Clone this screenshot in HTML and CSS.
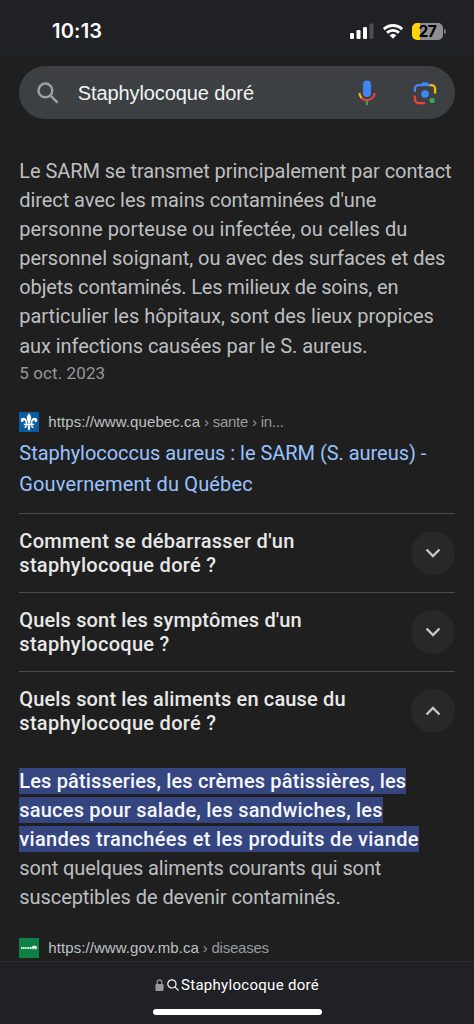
FILE: index.html
```html
<!DOCTYPE html>
<html lang="fr">
<head>
<meta charset="utf-8">
<meta name="viewport" content="width=device-width">
<title>Staphylocoque doré</title>
<link rel="stylesheet" href="styles.css">
</head>
<body>
<div class="phone">
  <header class="status">
    <span class="time">10:13</span>
    <div class="indicators">
      <svg class="signal" viewBox="0 0 24 16"><g fill="#fff"><rect y="10" width="4" height="6" rx="1.2"/><rect x="6.5" y="7" width="4" height="9" rx="1.2"/><rect x="13" y="4" width="4" height="12" rx="1.2"/></g><rect x="19.5" y="0.5" width="4" height="15.5" rx="1.2" fill="#4d4e51"/></svg>
      <svg class="wifi" viewBox="0 0 20 15"><g fill="none" stroke="#fff" stroke-width="2.9"><path d="M.9 5.2a13 13 0 0 1 18.2 0"/><path d="M4 8.8a8.6 8.6 0 0 1 12 0"/></g><path fill="#fff" d="M6.6 11.3a5 5 0 0 1 6.8 0L10 14.8z"/></svg>
      <div class="battery"><span>27</span></div>
    </div>
  </header>

  <main class="page">
    <div class="search">
      <svg class="search-icon" viewBox="0 0 22 22"><g fill="none" stroke="#9aa0a6" stroke-width="2.5"><circle cx="8.4" cy="8.4" r="6.9"/><path d="m13.3 13.3 7.3 7.3"/></g></svg>
      <span class="query">Staphylocoque doré</span>
      <svg class="mic" viewBox="0 0 18 26"><rect x="5" y="0.5" width="8" height="16.5" rx="4" fill="#4285f4"/><g fill="none" stroke-width="2.1"><path stroke="#fbbc04" d="M1.4 13a8 8 0 0 0 2.3 5.2"/><path stroke="#ea4335" d="M3.4 17.9a7.8 7.8 0 0 0 13.2-4.9"/><path stroke="#34a853" d="M9 20.8v4.4"/></g></svg>
      <svg class="lens" viewBox="0 0 24 24"><g fill="none" stroke-width="2.3"><path stroke="#4285f4" d="M1.9 11V7.8a3.6 3.6 0 0 1 3.6-3.6H17"/><path stroke="#fbbc04" d="M16.5 4.2h2a3.6 3.6 0 0 1 3.6 3.6V12.5"/><path stroke="#ea4335" d="M1.9 14.5v4a3.6 3.6 0 0 0 3.6 3.6H12"/></g><path fill="#4285f4" d="M7.3 4.2 9 1.4h6l1.7 2.8z"/><circle cx="12" cy="13" r="3.8" fill="#4285f4"/><circle cx="19.2" cy="19.4" r="2.6" fill="#34a853"/></svg>
    </div>

    <p class="answer">
      <span class="l1">Le SARM se transmet principalement par contact</span>
      <span class="l2">direct avec les mains contaminées d'une</span>
      <span class="l3">personne porteuse ou infectée, ou celles du</span>
      <span class="l4">personnel soignant, ou avec des surfaces et des</span>
      <span class="l5">objets contaminés. Les milieux de soins, en</span>
      <span class="l6">particulier les hôpitaux, sont des lieux propices</span>
      <span class="l7">aux infections causées par le S. aureus.</span>
    </p>
    <div class="date">5 oct. 2023</div>

    <div class="source">
      <svg class="favicon" viewBox="0 0 20 20"><rect width="20" height="20" fill="#0b5c9e"/><g fill="#fff"><path d="M10 1.3c1.4 1.8 2.2 3.2 2.2 4.7 0 2-1.3 3.4-1.3 5.4H9.1c0-2-1.3-3.4-1.3-5.4 0-1.5.8-2.9 2.2-4.7z"/><path d="M8.4 12.3c0-3.4-1.2-6.6-4-6.6-2 0-3 1.6-2.6 3 .3 1.3 1.7 1.9 2.6 1.1-.4-1 .1-1.7.8-1.6 1.1.2 1.5 2 1.5 4.1zM11.6 12.3c0-3.4 1.2-6.6 4-6.6 2 0 3 1.6 2.6 3-.3 1.3-1.7 1.9-2.6 1.1.4-1-.1-1.7-.8-1.6-1.1.2-1.5 2-1.5 4.1z"/><path d="M4.8 11.7h10.4v1.5H4.8z"/><path d="M8.8 13.2h2.4c0 2 .2 3.8-1.2 5.6-1.4-1.8-1.2-3.6-1.2-5.6z"/><path d="M8.1 13.2c0 1.6-.9 3-2.9 2.5.3-1.1 1.1-1.4 1.6-2.5zM11.9 13.2c0 1.6.9 3 2.9 2.5-.3-1.1-1.1-1.4-1.6-2.5z"/></g></svg>
      <span class="url">https://www.quebec.ca</span><span class="crumb"> › sante › in...</span>
    </div>
    <a class="result">
      <span class="r1">Staphylococcus aureus : le SARM (S. aureus) -</span>
      <span class="r2">Gouvernement du Québec</span>
    </a>

    <section class="questions">
      <div class="question">
        <h2><span class="q1">Comment se débarrasser d'un</span><span class="q2">staphylocoque doré ?</span></h2>
        <div class="toggle"><svg viewBox="0 0 16 10"><path d="m1.5 1.5 6.5 6.5 6.5-6.5"/></svg></div>
      </div>
      <div class="question">
        <h2><span class="q3">Quels sont les symptômes d'un</span><span class="q2">staphylocoque ?</span></h2>
        <div class="toggle"><svg viewBox="0 0 16 10"><path d="m1.5 1.5 6.5 6.5 6.5-6.5"/></svg></div>
      </div>
      <div class="question">
        <h2><span class="q3">Quels sont les aliments en cause du</span><span class="q2">staphylocoque doré ?</span></h2>
        <div class="toggle"><svg viewBox="0 0 16 10"><path d="m1.5 8.5 6.5-6.5 6.5 6.5"/></svg></div>
      </div>
    </section>

    <p class="answer foods">
      <span class="h1"><mark>Les pâtisseries, les crèmes pâtissières, les</mark></span>
      <span class="h2"><mark>sauces pour salade, les sandwiches, les</mark></span>
      <span class="h3"><mark>viandes tranchées et les produits de viande</mark></span>
      <span class="l8">sont quelques aliments courants qui sont</span>
      <span class="l7">susceptibles de devenir contaminés.</span>
    </p>
    <div class="source second">
      <svg class="favicon" viewBox="0 0 20 20"><rect width="20" height="20" fill="#0d8043"/><path d="M2 10h11" stroke="#d5eadd" stroke-width="1.8" stroke-dasharray="1.4 .35"/><path fill="#fff" d="M12.6 9.6c.7-1.5 2-2 3.2-1.6 1.3-.2 2.3.6 2.4 2.1l-.8.4-.4 1h-.8l-.2-1.1h-1.4l-.3 1h-.8l-.1-1.5z"/></svg>
      <span class="url">https://www.gov.mb.ca</span><span class="crumb"> › diseases</span>
    </div>
  </main>

  <footer class="toolbar">
    <div class="address">
      <svg class="lock" viewBox="0 0 9 12"><rect x=".4" y="5" width="8.2" height="7" rx="1.3" fill="#98989f"/><path d="M2.2 5.5V3.2a2.3 2.3 0 0 1 4.6 0v2.3" fill="none" stroke="#98989f" stroke-width="1.2"/></svg>
      <svg class="glass" viewBox="0 0 12 12"><g fill="none" stroke="#fff" stroke-width="1.2" stroke-linecap="round"><circle cx="4.9" cy="4.9" r="4.1"/><path d="m7.9 7.9 3.3 3.3"/></g></svg>
      <span>Staphylocoque doré</span>
    </div>
    <div class="home"></div>
  </footer>
</div>
</body>
</html>
```
FILE: styles.css
```css
* { box-sizing: border-box; margin: 0; }
body { background: #1f1f1f; font-family: Roboto, "Liberation Sans", sans-serif; }
svg { display: block; flex: none; }
.phone { width: 474px; height: 1024px; display: flex; flex-direction: column; overflow: hidden; }

.status { flex: none; height: 56px; padding: 6px 31px 0 52px; background: #202125; display: flex; align-items: center; justify-content: space-between; }
.time { color: #fff; font: 600 20px/24px Inter, sans-serif; letter-spacing: .2px; }
.indicators { display: flex; align-items: center; }
.signal { width: 24px; height: 16px; margin-right: 9px; }
.wifi { width: 20px; height: 15px; margin-right: 9px; }
.battery { position: relative; width: 31px; height: 17px; border-radius: 5px; background: linear-gradient(90deg, #ffd60a 8px, #8e8e92 8px); color: #000; font: 700 15.5px/17px Inter, sans-serif; text-align: center; }
.battery span { letter-spacing: -.3px; }
.battery::after { content: ""; position: absolute; right: -2.5px; top: 6px; width: 1.6px; height: 5px; border-radius: 0 2px 2px 0; background: #77777b; }

.page { flex: 1; min-height: 0; padding: 10px 19.5px 0 19.3px; overflow: hidden; }
.search { height: 53px; border-radius: 27px; background: #3c4043; display: flex; align-items: center; padding: 0 18px; }
.search-icon { width: 22px; height: 22px; }
.query { flex: 1; margin-left: 18.5px; color: #f1f3f4; font: 20px/28px "Liberation Sans", sans-serif; letter-spacing: -.1px; }
.mic { width: 18px; height: 26px; margin-right: 37px; }
.lens { width: 24px; height: 24px; }

.answer { margin-top: 38px; color: #bdbfc1; font-size: 20px; line-height: 29.1px; }
.answer span, .result span, h2 span { display: block; white-space: nowrap; }
.l1, .l2, .l7 { letter-spacing: -.07px; }
.l3 { letter-spacing: .044px; }
.l4, .l6 { letter-spacing: -.016px; }
.l5 { letter-spacing: -.15px; }
.l8 { letter-spacing: -.116px; }
.date { color: #96989b; font-size: 17px; line-height: 24px; letter-spacing: .1px; margin-top: .5px; }

.source { display: flex; align-items: center; height: 20px; margin-top: 27px; font: 15px/20px "Liberation Sans", sans-serif; white-space: pre; }
.favicon { width: 20px; height: 20px; margin-right: 9px; }
.url { color: #bdc1c6; letter-spacing: .08px; }
.crumb { color: #969ba1; letter-spacing: -.25px; }
.result { display: block; margin-top: 6px; color: #99c3ff; font-size: 20px; line-height: 31.3px; }
.r1 { letter-spacing: -.035px; }
.r2 { letter-spacing: .145px; }

.questions { margin-top: 12px; }
.question { height: 79px; border-top: 1px solid #4a4b4c; display: flex; align-items: center; justify-content: space-between; }
h2 { color: #e8e8e8; font-size: 20px; line-height: 24px; font-weight: 500; }
.q1, .q2 { letter-spacing: .29px; }
.q3 { letter-spacing: .15px; }
.toggle { width: 44px; height: 44px; border-radius: 50%; background: #282828; display: grid; place-items: center; }
.toggle svg { width: 16px; height: 10px; fill: none; stroke: #c3c6d6; stroke-width: 2.4; }

.foods { margin-top: 17px; }
mark { color: #f5f7ff; background: #35457f; font-weight: 500; padding: 1px 0; }
.h1 { letter-spacing: .145px; }
.h2 { letter-spacing: .209px; }
.h3 { letter-spacing: .318px; }
.second { margin-top: 25.5px; }

.toolbar { flex: none; height: 63px; background: #202125; border-top: 1px solid #2b2c2f; display: flex; flex-direction: column; align-items: center; }
.address { display: flex; align-items: center; height: 20px; margin-top: 13px; color: #fff; font: 15px/20px Roboto, sans-serif; letter-spacing: .29px; }
.lock { width: 9px; height: 12px; margin-right: 3px; }
.glass { width: 12px; height: 12px; margin-right: 2px; }
.home { width: 169px; height: 6px; margin-top: 14px; border-radius: 3px; background: #fff; }
```
